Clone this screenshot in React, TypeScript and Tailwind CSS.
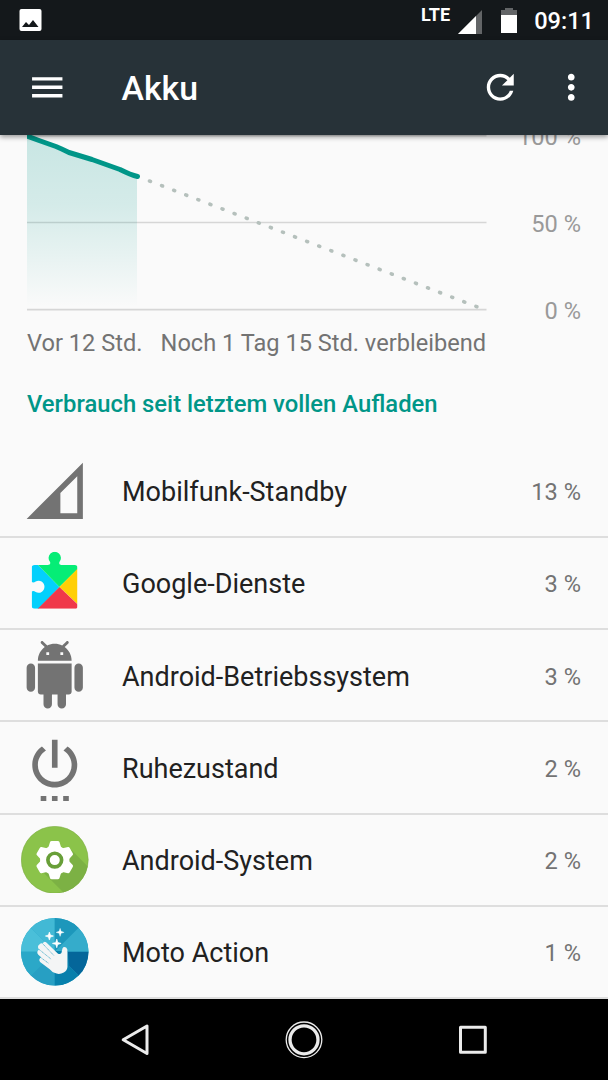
import type { ReactNode } from "react";

const ANDROID_PATH =
  "M6 18c0 .55.45 1 1 1h1v3.5c0 .83.67 1.5 1.5 1.5s1.5-.67 1.5-1.5V19h2v3.5c0 .83.67 1.5 1.5 1.5s1.5-.67 1.5-1.5V19h1c.55 0 1-.45 1-1V8H6v10zM3.5 8C2.67 8 2 8.67 2 9.5v7c0 .83.67 1.5 1.5 1.5S5 17.33 5 16.5v-7C5 8.67 4.33 8 3.5 8zm17 0c-.83 0-1.5.67-1.5 1.5v7c0 .83.67 1.5 1.5 1.5s1.5-.67 1.5-1.5v-7c0-.83-.67-1.5-1.5-1.5zm-4.97-5.84l1.3-1.3c.2-.2.2-.51 0-.71-.2-.2-.51-.2-.71 0l-1.48 1.48C13.85 1.23 12.95 1 12 1c-.96 0-1.86.23-2.66.63L7.85.15c-.2-.2-.51-.2-.71 0-.2.2-.2.51 0 .71l1.31 1.31C6.97 3.26 6 5.01 6 7h12c0-1.99-.97-3.75-2.47-4.84zM10 5H9V4h1v1zm5 0h-1V4h1v1z";

const POWER_PATH =
  "M7 24h2v-2H7v2zm4 0h2v-2h-2v2zm2-22h-2v10h2V2zm3.56 2.44l-1.45 1.45C16.84 6.94 18 8.83 18 11c0 3.31-2.69 6-6 6s-6-2.69-6-6c0-2.17 1.16-4.06 2.88-5.12L7.44 4.44C5.36 5.88 4 8.28 4 11c0 4.42 3.58 8 8 8s8-3.58 8-8c0-2.72-1.36-5.12-3.44-6.56zM15 24h2v-2h-2v2z";

const SIGNAL_PATH = "M2 22h20V2L2 22zm18-2h-6v-7.17l6-6V20z";

const REFRESH_PATH =
  "M17.65 6.35C16.2 4.9 14.21 4 12 4c-4.42 0-7.99 3.58-7.99 8s3.57 8 7.99 8c3.73 0 6.84-2.55 7.73-6h-2.08c-.82 2.33-3.04 4-5.65 4-3.31 0-6-2.69-6-6s2.69-6 6-6c1.66 0 3.14.69 4.22 1.78L13 11h7V4l-2.35 2.35z";

function ActionIcon({ d }: { d: string }) {
  return (
    <svg viewBox="0 0 24 24" className="size-[40.5px] shrink-0 fill-white">
      <path d={d} />
    </svg>
  );
}

function GrayIcon({ d }: { d: string }) {
  return (
    <svg viewBox="0 0 24 24" className="size-[67.5px] fill-[#737373]">
      <path fillRule="evenodd" d={d} />
    </svg>
  );
}

function PlayServicesIcon() {
  return (
    <svg viewBox="33 30 202 202" className="size-[67.5px]">
      <clipPath id="piece">
        <path d="M74 78H113Q123 78 120 69A18.500 18.500 0 1 1 148 69Q145 78 154 78H194Q202 78 202 86V201Q202 209 194 209H74Q65 209 65 200V157Q71 154 77 159A18 18 0 1 0 77 127Q71 132 65 129V86Q65 78 74 78Z" />
      </clipPath>
      <g clipPath="url(#piece)">
        <path fill="#03d0fc" d="M60 30H84V78L148 144L83 212H60Z" />
        <path fill="#05ed76" d="M84 30H206V87L148 144L84 78Z" />
        <path fill="#ffcf05" d="M206 85V198L148 144Z" />
        <path fill="#f0384a" d="M148 144L206 199V212H80Z" />
      </g>
    </svg>
  );
}

function AndroidSystemIcon() {
  return (
    <svg viewBox="33 31 202 202" className="size-[67.5px]">
      <clipPath id="greenDisc">
        <circle cx="134" cy="132" r="100.500" />
      </clipPath>
      <g clipPath="url(#greenDisc)">
        <rect x="30" y="30" width="210" height="210" fill="#8bc34a" />
        <path fill="#7cb144" d="M184 103L260 180V260H190L88 158L110 140L160 100Z" />
      </g>
      <circle cx="134" cy="132" r="100" fill="none" stroke="#7cab45" strokeWidth="1.500" />
      <circle cx="134" cy="133" r="44" fill="#fff" />
      {[0, 60, 120, 180, 240, 300].map((angle) => (
        <path
          key={angle}
          fill="#fff"
          d="M114 98L120 79Q121 76 125 76H143Q147 76 148 79L154 98Z"
          transform={`rotate(${angle} 134 133)`}
        />
      ))}
      <circle cx="134" cy="133" r="20.500" fill="none" stroke="#689f38" strokeWidth="11" />
    </svg>
  );
}

function MotoIcon() {
  return (
    <svg viewBox="33 31 202 202" className="size-[67.5px]">
      <clipPath id="blueDisc">
        <circle cx="134" cy="132" r="101" />
      </clipPath>
      <g clipPath="url(#blueDisc)">
        <rect x="30" y="30" width="210" height="210" fill="#28a5c6" />
        <path fill="#4abfd9" d="M134 132L30 28V132Z" />
        <path fill="#42b9d5" d="M134 132L30 28H134Z" />
        <path fill="#1d97bb" d="M134 132V28H238Z" />
        <path fill="#35accb" d="M134 132L238 28V132Z" />
        <path fill="#04669a" d="M134 132H238V236Z" />
        <path fill="#087fac" d="M134 132L238 236H134Z" />
        <path fill="#279fc3" d="M134 132V236H30Z" />
        <path fill="#2ba8c8" d="M134 132L30 236V132Z" />
        <path fill="#0781ac" d="M173 130L178 182L140 198L172 232H134V130Z" />
      </g>
      <path
        fill="#f4f5f5"
        d="M98 107Q102 99 109 104L143 137Q149 141 154 136L157 122Q160 115 168 119Q173 123 172 131V178Q171 190 161 194Q147 202 133 195Q127 193 119 184L90 163Q85 157 90 151L94 149L85 141Q79 134 84 128L87 125Q80 116 88 110Q92 106 98 107Z"
      />
      <path
        d="M98 108L132 144M87 125L123 154M90 148L115 166"
        fill="none"
        stroke="#4daec9"
        strokeWidth="2.500"
        strokeDasharray="4 1.500"
      />
      <g fill="#fff">
        <path d="M118 73L121 82L130 85L121 88L118 97L115 88L106 85L115 82Z" stroke="#fff" strokeWidth="2" />
        <path d="M150 62L153 71L162 74L153 77L150 86L147 77L138 74L147 71Z" stroke="#fff" strokeWidth="1" />
        <path d="M140 94L143 104L153 107L143 110L140 120L137 110L127 107L137 104Z" stroke="#fff" strokeWidth="2" />
      </g>
    </svg>
  );
}

interface Consumer {
  name: string;
  share: string;
  icon: ReactNode;
}

const CONSUMERS: Consumer[] = [
  { name: "Mobilfunk-Standby", share: "13 %", icon: <GrayIcon d={SIGNAL_PATH} /> },
  { name: "Google-Dienste", share: "3 %", icon: <PlayServicesIcon /> },
  { name: "Android-Betriebssystem", share: "3 %", icon: <GrayIcon d={ANDROID_PATH} /> },
  { name: "Ruhezustand", share: "2 %", icon: <GrayIcon d={POWER_PATH} /> },
  { name: "Android-System", share: "2 %", icon: <AndroidSystemIcon /> },
  { name: "Moto Action", share: "1 %", icon: <MotoIcon /> },
];

function StatusBar() {
  return (
    <div className="h-10 shrink-0 bg-[#14181b] flex items-start pl-[19px] pr-[14px] text-white">
      <svg viewBox="0 0 23 23" className="mt-[9px] size-[23px]">
        <rect x="0.500" y="0" width="22" height="22" rx="2" fill="#fff" />
        <path d="M3 18L7 13L10 16L14 11L19.500 18Z" fill="#14181b" />
      </svg>
      <span className="ml-auto mt-[5px] text-[18px] leading-5 font-bold">LTE</span>
      <svg viewBox="0 0 24 24" className="ml-2 mt-[9.500px] size-6">
        <path d="M0 24L24 0V24Z" fill="#636567" />
        <path d="M0 24L18 6V24Z" fill="#fff" />
      </svg>
      <svg viewBox="0 0 16 25" className="ml-[19px] mt-2 w-4 h-[25px]">
        <path d="M4 0H12V2H16V7H0V2H4Z" fill="#636567" />
        <path d="M0 7H16V25H0Z" fill="#fff" />
      </svg>
      <span className="ml-[17px] mt-[7px] text-[23.600px] leading-7 font-medium">09:11</span>
    </div>
  );
}

function Toolbar() {
  return (
    <header className="relative z-10 h-[95px] shrink-0 bg-[#273238] shadow-[0_2px_5px_rgba(0,0,0,0.4)] flex items-center pl-[27px] pr-[17px] text-white">
      <ActionIcon d="M3 18h18v-2H3v2zm0-5h18v-2H3v2zm0-7v2h18V6H3z" />
      <h1 className="ml-[54px] pt-[3px] text-[33.800px] leading-10 font-medium">Akku</h1>
      <div className="ml-auto flex gap-[30px]">
        <ActionIcon d={REFRESH_PATH} />
        <ActionIcon d="M12 8c1.100 0 2-.9 2-2s-.9-2-2-2-2 .9-2 2 .9 2 2 2zm0 2c-1.100 0-2 .9-2 2s.9 2 2 2 2-.9 2-2-.9-2-2-2zm0 6c-1.100 0-2 .9-2 2s.9 2 2 2 2-.9 2-2-.9-2-2-2z" />
      </div>
    </header>
  );
}

function BatteryChart() {
  return (
    <section className="h-[190px] shrink-0 flex justify-between pl-[27px] pr-[27px]">
      <svg viewBox="0 0 460 177" className="w-[460px] h-[177px]">
        <defs>
          <linearGradient id="fade" x1="0" y1="0" x2="0" y2="1">
            <stop offset="0" stopColor="#009688" stopOpacity="0.2" />
            <stop offset="0.4" stopColor="#009688" stopOpacity="0.15" />
            <stop offset="1" stopColor="#009688" stopOpacity="0" />
          </linearGradient>
        </defs>
        <path d="M0 0.750H459.500M0 87.500H459.500M0 174.700H459.500" stroke="#d6d6d6" strokeWidth="1.700" />
        <path d="M0 2L29 12L42 18L93 34L110 41V172H0Z" fill="url(#fade)" />
        <path
          d="M0 1L12 5.500L29 11.500Q35 14 42 17.500L65 24.500L93 34.500Q104 40 110.500 41.500"
          fill="none"
          stroke="#009688"
          strokeWidth="5"
          strokeLinecap="round"
          strokeLinejoin="round"
        />
        <path
          d="M122.500 46L450 171.800"
          fill="none"
          stroke="#b5c0bc"
          strokeWidth="3.600"
          strokeLinecap="round"
          strokeDasharray="1 11.950"
        />
      </svg>
      <div className="-mt-3 flex flex-col gap-[59px] text-right text-[23.600px] leading-7 text-[#999]">
        <span>100 %</span>
        <span>50 %</span>
        <span>0 %</span>
      </div>
    </section>
  );
}

function NavBar() {
  return (
    <nav className="h-[81px] shrink-0 bg-black flex items-center justify-center gap-[129px]">
      <svg viewBox="0 0 40 40" className="size-10" fill="none" stroke="#ebebeb" strokeWidth="3" strokeLinejoin="round">
        <path d="M8.200 19.800L32 6V33.500Z" />
      </svg>
      <svg viewBox="0 0 40 40" className="size-10" fill="none" stroke="#ebebeb">
        <circle cx="20" cy="19.800" r="17.800" strokeWidth="1.300" />
        <circle cx="20" cy="19.800" r="14" strokeWidth="3.300" />
      </svg>
      <svg viewBox="0 0 40 40" className="size-10" fill="none" stroke="#ebebeb" strokeWidth="3" strokeLinejoin="round">
        <path d="M7.500 7.200H32.300V32.200H7.500Z" />
      </svg>
    </nav>
  );
}

export default function App() {
  return (
    <div className="w-[608px] h-[1080px] overflow-hidden flex flex-col bg-[#fafafa] font-[Roboto,sans-serif]">
      <StatusBar />
      <Toolbar />
      <BatteryChart />
      <div className="h-9 shrink-0 flex justify-between pl-[27px] pr-[122px] text-[23.600px] leading-9 text-[#737373]">
        <span>Vor 12 Std.</span>
        <span>Noch 1 Tag 15 Std. verbleibend</span>
      </div>
      <h2 className="h-[84.500px] shrink-0 pt-[25px] pl-[27px] text-[23.820px] leading-9 font-medium text-[#009688]">
        Verbrauch seit letztem vollen Aufladen
      </h2>
      <ul className="flex-1 flex flex-col">
        {CONSUMERS.map((item) => (
          <li key={item.name} className="flex-1 border-b-2 border-[#dedede] flex items-center pl-[21px] pr-[27px]">
            {item.icon}
            <span className="ml-[33.500px] pt-[3px] text-[27px] leading-8 text-[#212121]">{item.name}</span>
            <span className="ml-auto pt-[3px] text-[23.600px] leading-8 text-[#737373]">{item.share}</span>
          </li>
        ))}
      </ul>
      <NavBar />
    </div>
  );
}
